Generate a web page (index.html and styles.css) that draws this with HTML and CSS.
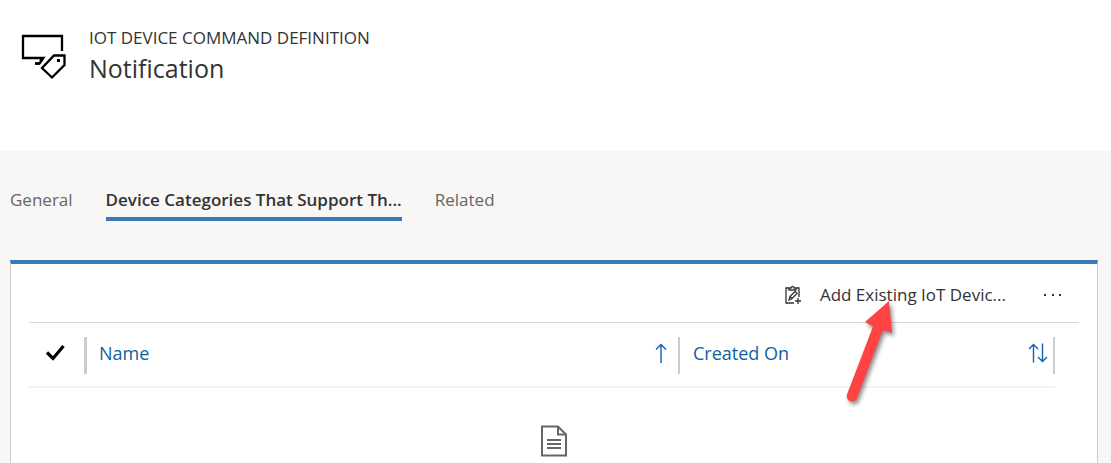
FILE: index.html
```html
<!DOCTYPE html>
<html lang="en">
<head>
<meta charset="utf-8">
<title>Notification - IoT Device Command Definition</title>
<link rel="stylesheet" href="styles.css">
</head>
<body>
<header class="record-header">
  <svg class="entity-icon" viewBox="0 0 46 46" width="46" height="46" fill="none" stroke="#000" stroke-width="2.300" aria-hidden="true">
    <path d="M41 17V2H2v22h20l-3 3"/>
    <path d="M14 29.500h5"/>
    <path d="M31 21h12v10L30.500 43.500 21 34z" fill="#fff" stroke="#fff" stroke-width="6"/>
    <path d="M14 29.500h4.500l4-5.500" fill="none"/>
    <path d="M33 21.500h10.500V31L31 43.500 21 34z" fill="#fff"/>
    <path d="M36 26.500h3" stroke-width="3"/>
  </svg>
  <div class="record-titles">
    <p class="entity-name">IOT DEVICE COMMAND DEFINITION</p>
    <h1 class="record-name">Notification</h1>
  </div>
</header>
<main class="form">
  <nav class="tabs" role="tablist" aria-label="Form sections">
    <button class="tab" role="tab" aria-selected="false">General</button>
    <button class="tab tab-active" role="tab" aria-selected="true">Device Categories That Support Th...</button>
    <button class="tab" role="tab" aria-selected="false">Related</button>
  </nav>
  <section class="card">
    <div class="commands">
      <button class="command">
        <svg viewBox="0 0 18 20" width="18" height="20" fill="none" stroke="#333" stroke-width="1.300" aria-hidden="true">
          <path d="M10 18H2V3h3M12 3h3v9"/>
          <path d="M5 5V3h2c0-2 3-2 3 0h2v2z"/>
          <path d="M5 15l1-3.500L11 6.500l2 2-5.500 5.500zM6 11.500l2 2"/>
          <path d="M11 16h6M14 13v6"/>
        </svg>
        <span>Add Existing IoT Devic...</span>
      </button>
      <button class="more" aria-label="More commands">
        <svg viewBox="0 0 18 4" width="18" height="4" fill="#333" aria-hidden="true">
          <path d="M0 1h2v2H0zM8 1h2v2H8zM15 1h2v2h-2z"/>
        </svg>
      </button>
    </div>
    <table class="grid">
      <thead>
        <tr>
          <th class="col-check" scope="col">
            <button class="cell cell-check" aria-label="Select all">
              <svg viewBox="0 0 20 18" width="20" height="18" fill="none" stroke="#000" stroke-width="3.200" aria-hidden="true">
                <path d="M2 8.500l6 6L18.500 2"/>
              </svg>
            </button>
          </th>
          <th class="col-name" scope="col">
            <button class="cell">
              <span>Name</span>
              <svg viewBox="0 0 12 20" width="12" height="20" fill="none" stroke="#1160b7" stroke-width="1.400" aria-hidden="true">
                <path d="M6 20V1.500M1 6.500l5-5 5 5"/>
              </svg>
            </button>
          </th>
          <th scope="col">
            <button class="cell cell-last">
              <span>Created On</span>
              <svg viewBox="0 0 20 20" width="20" height="20" fill="none" stroke="#1160b7" stroke-width="1.400" aria-hidden="true">
                <path d="M5.500 19.500V1.500M1 6l4.500-4.500L10 6M14.500.500v18M10 14l4.500 4.500L19 14"/>
              </svg>
            </button>
          </th>
        </tr>
      </thead>
    </table>
    <div class="empty">
      <svg viewBox="0 0 28 32" width="28" height="32" fill="none" stroke="#666" stroke-width="2" aria-hidden="true">
        <path d="M2 1.500h16l8 8v21H2z"/>
        <path d="M18 1.500v8h8"/>
        <path d="M7 15h14M7 19h14M7 23h14"/>
      </svg>
    </div>
    <svg class="pointer" viewBox="0 0 60 115" width="60" height="115" aria-hidden="true">
      <path d="M49 6L25 27l8 4.500L7 99.500A5 5 0 0 0 17 103L43 35l9 3z" fill="#ff4343"/>
    </svg>
  </section>
</main>
</body>
</html>
```
FILE: styles.css
```css
* {
  box-sizing: border-box;
}

body {
  margin: 0;
  min-height: 100vh;
  display: flex;
  flex-direction: column;
  background: #fff;
  color: #333;
  font-family: "Segoe UI", "Open Sans", "Noto Sans", sans-serif;
  font-size: 17px;
  line-height: 24px;
}

button {
  margin: 0;
  padding: 0;
  border: 0;
  background: none;
  color: inherit;
  font: inherit;
  text-align: left;
  white-space: nowrap;
  cursor: pointer;
}

svg {
  display: block;
  flex: none;
}

.record-header {
  display: flex;
  gap: 22px;
  padding: 26px 21px 65px;
}

.entity-icon {
  margin-top: 8px;
}

.entity-name {
  margin: 0;
}

.record-name {
  margin: 0;
  font-size: 25px;
  font-weight: 400;
  line-height: 36px;
}

.form {
  flex: 1;
  display: flex;
  flex-direction: column;
  padding: 36px 13px 0 10px;
  background: #f8f7f5;
}

.tabs {
  display: flex;
  gap: 33px;
  margin-bottom: 39px;
}

.tab {
  height: 34px;
  padding-bottom: 4px;
  border-bottom: 4px solid transparent;
  color: #666;
}

.tab-active {
  border-color: #3b79b7;
  color: #333;
  font-weight: 600;
}

.card {
  position: relative;
  flex: 1;
  padding: 0 18px;
  border: 1px solid #ccc;
  border-top: 4px solid #3b79b7;
  border-bottom: 0;
  background: #fff;
}

.commands {
  display: flex;
  justify-content: flex-end;
  align-items: center;
  gap: 38px;
  height: 59px;
  padding: 4px 17px 0 0;
  border-bottom: 1px solid #d6d6d6;
}

.command {
  display: flex;
  align-items: center;
  gap: 18px;
}

.more {
  padding: 8px 0;
}

.grid {
  width: calc(100% - 24px);
  border-collapse: collapse;
  table-layout: fixed;
  border-bottom: 2px solid #f3f3f3;
  color: #115ea3;
}

.grid th {
  padding: 14px 0 12px;
  font-weight: 400;
}

.col-check {
  width: 58px;
}

.col-name {
  width: 57.8%;
}

.cell {
  display: flex;
  justify-content: space-between;
  align-items: center;
  width: 100%;
  height: 37px;
  padding: 0 11px 6px 12px;
  border-right: 2px solid #ccc;
  font-size: 18px;
}

.cell-check {
  justify-content: flex-start;
  padding-left: 16px;
  border-right-width: 3px;
}

.cell-last {
  padding-left: 13px;
  padding-right: 5px;
}

.empty {
  display: flex;
  justify-content: center;
  padding-top: 37px;
}

.pointer {
  position: absolute;
  top: 31px;
  right: 197px;
  filter: drop-shadow(2px 3px 2px rgba(0, 0, 0, 0.45));
}
```
